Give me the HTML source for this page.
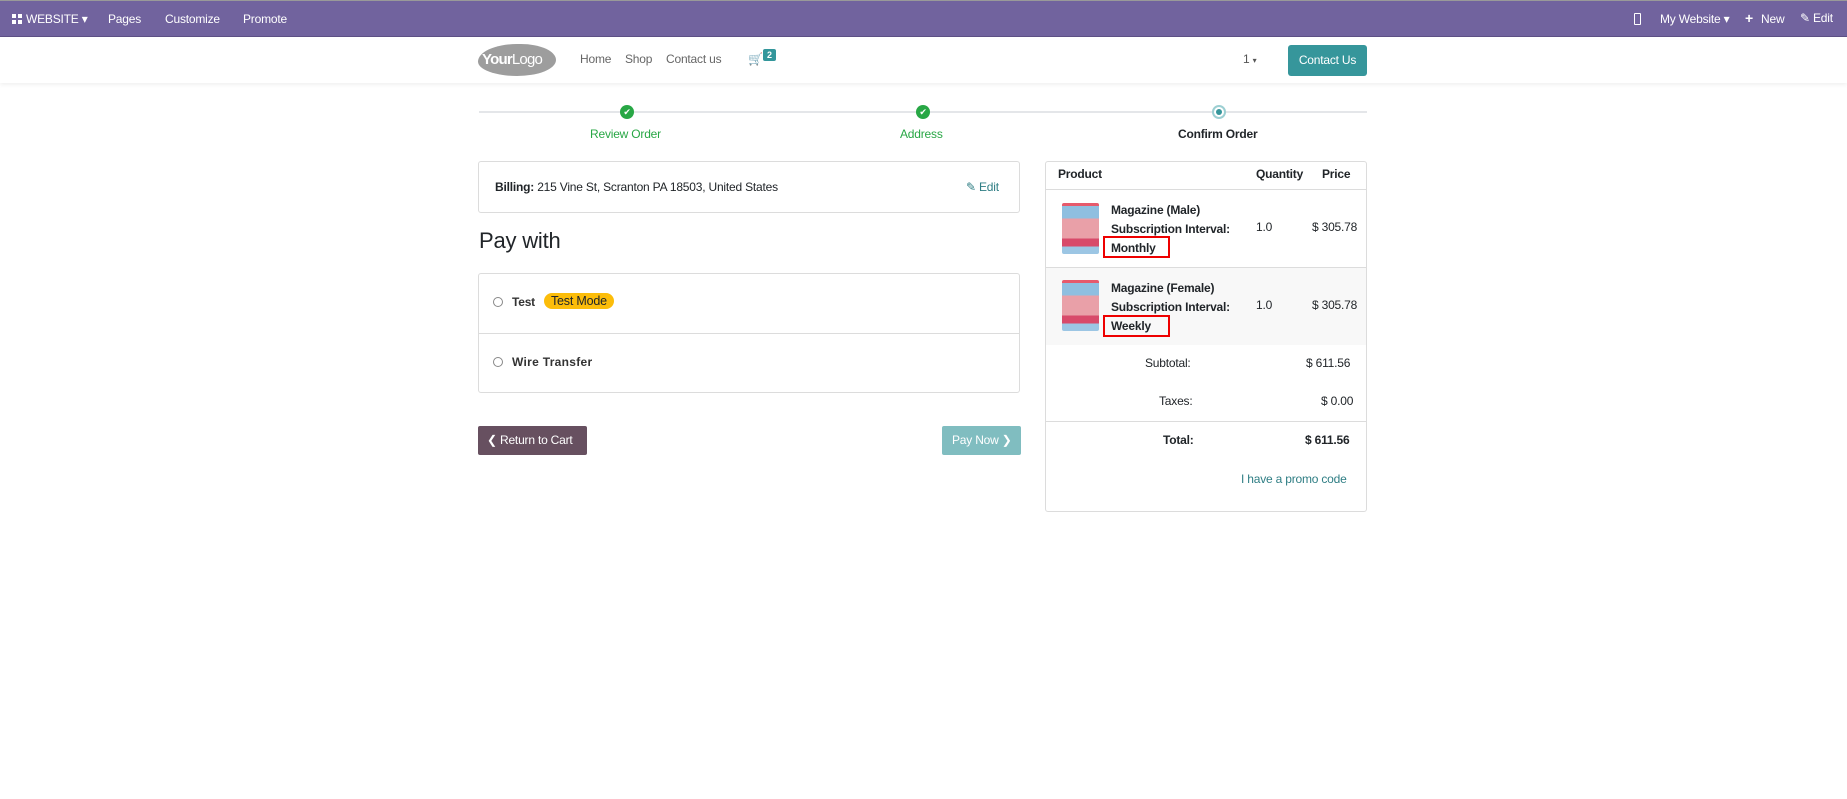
<!DOCTYPE html>
<html><head><meta charset="utf-8"><style>
*{box-sizing:border-box;margin:0;padding:0}
body{width:1847px;height:799px;background:#fff;font-family:"Liberation Sans",sans-serif;font-size:12px;letter-spacing:-.2px;color:#212529;position:relative;overflow:hidden}
.a{position:absolute;white-space:nowrap}
.top{position:absolute;left:0;top:0;width:1847px;height:37px;background:#71639e;border-top:1px solid #999;border-bottom:1px solid #5e5186;color:#fff;font-size:12px}
.nav{position:absolute;left:0;top:37px;width:1847px;height:46px;background:#fff;box-shadow:0 2px 4px rgba(0,0,0,.06)}
.card{position:absolute;border:1px solid #dcdcdc;border-radius:3px;background:#fff}
b{font-weight:bold}
.teal{color:#2f7e84}
</style></head><body>
<div class="top">
 <div class="a" style="left:12px;top:13px;width:10px;height:10px;background:linear-gradient(#fff 0 4px,transparent 4px 6px,#fff 6px) ;"></div>
 <div class="a" style="left:16px;top:13px;width:2px;height:10px;background:#71639e"></div>
 <div class="a" style="left:26px;top:11px">WEBSITE ▾</div>
 <div class="a" style="left:108px;top:11px">Pages</div>
 <div class="a" style="left:165px;top:11px">Customize</div>
 <div class="a" style="left:243px;top:11px">Promote</div>
 <div class="a" style="left:1634px;top:12px;width:7px;height:12px;border:1.5px solid #fff;border-radius:1px"></div>
 <div class="a" style="left:1660px;top:11px">My Website ▾</div>
 <div class="a" style="left:1745px;top:9px;font-weight:bold;font-size:14px">+</div>
 <div class="a" style="left:1761px;top:11px">New</div>
 <div class="a" style="left:1800px;top:10px">✎ Edit</div>
</div>
<div class="nav">
 <div class="a" style="left:478px;top:7px;width:78px;height:32px;background:#9d9d9d;border-radius:50% 45% 50% 50%/55% 50% 50% 45%"></div>
 <div class="a" style="left:482px;top:14px;color:#fff;font-size:15px;letter-spacing:-.8px"><b>Your</b>Logo</div>
 <div class="a" style="left:580px;top:15px;color:#666">Home</div>
 <div class="a" style="left:625px;top:15px;color:#666">Shop</div>
 <div class="a" style="left:666px;top:15px;color:#666">Contact us</div>
 <div class="a" style="left:748px;top:15px;color:#666;font-size:12px">🛒</div>
 <div class="a" style="left:763px;top:12px;background:#33969b;color:#fff;font-size:9px;font-weight:bold;padding:1px 4px;border-radius:2px">2</div>
 <div class="a" style="left:1243px;top:15px;color:#555">1 <span style="font-size:8px">▾</span></div>
 <div class="a" style="left:1288px;top:8px;width:79px;height:31px;background:#36969b;border-radius:3px;color:#fff;text-align:center;line-height:31px">Contact Us</div>
</div>
<div class="a" style="left:479px;top:111px;width:888px;height:2px;background:#e4e6e9"></div>
<div class="a" style="left:620px;top:105px;width:14px;height:14px;border-radius:50%;background:#28a745;color:#fff;font-size:9px;text-align:center;line-height:14px">✔</div>
<div class="a" style="left:916px;top:105px;width:14px;height:14px;border-radius:50%;background:#28a745;color:#fff;font-size:9px;text-align:center;line-height:14px">✔</div>
<div class="a" style="left:1212px;top:105px;width:14px;height:14px;border-radius:50%;background:#fff;border:2px solid #9ccfd2"><div style="margin:2px;width:6px;height:6px;border-radius:50%;background:#36969b"></div></div>
<div class="a" style="left:590px;top:127px;color:#28a745">Review Order</div>
<div class="a" style="left:900px;top:127px;color:#28a745">Address</div>
<div class="a" style="left:1178px;top:127px;font-weight:bold">Confirm Order</div>

<div class="card" style="left:478px;top:161px;width:542px;height:52px"></div>
<div class="a" style="left:495px;top:180px"><b>Billing:</b> 215 Vine St, Scranton PA 18503, United States</div>
<div class="a teal" style="left:966px;top:180px">✎ Edit</div>
<div class="a" style="left:479px;top:228px;font-size:22px">Pay with</div>

<div class="card" style="left:478px;top:273px;width:542px;height:120px"></div>
<div class="a" style="left:479px;top:333px;width:540px;height:1px;background:#dcdcdc"></div>
<div class="a" style="left:493px;top:297px;width:10px;height:10px;border:1px solid #888;border-radius:50%"></div>
<div class="a" style="left:512px;top:295px;font-weight:bold;font-size:12px;color:#333">Test</div>
<div class="a" style="left:544px;top:293px;background:#fcbd0a;border-radius:8px;padding:1px 7px;font-size:12.5px">Test Mode</div>
<div class="a" style="left:493px;top:357px;width:10px;height:10px;border:1px solid #888;border-radius:50%"></div>
<div class="a" style="left:512px;top:355px;font-weight:bold;font-size:12px;color:#333;letter-spacing:.3px">Wire Transfer</div>

<div class="a" style="left:478px;top:426px;width:109px;height:29px;background:#675060;border-radius:2px;color:#fff;line-height:29px;padding-left:9px">❮ Return to Cart</div>
<div class="a" style="left:942px;top:426px;width:79px;height:29px;background:#80bdc0;border-radius:2px;color:#fff;line-height:29px;padding-left:10px">Pay Now ❯</div>

<div class="card" style="left:1045px;top:161px;width:322px;height:351px"></div>
<div class="a" style="left:1046px;top:189px;width:320px;height:1px;background:#dcdcdc"></div>
<div class="a" style="left:1046px;top:267px;width:320px;height:78px;background:#f8f8f8;border-top:1px solid #dcdcdc"></div>
<div class="a" style="left:1058px;top:167px;font-weight:bold">Product</div>
<div class="a" style="left:1256px;top:167px;font-weight:bold">Quantity</div>
<div class="a" style="left:1322px;top:167px;font-weight:bold">Price</div>

<div class="a" style="left:1062px;top:203px;width:37px;height:51px;background:linear-gradient(#e65a6c 0 3px,#8fbfe0 3px 30%,#e9a0a8 30% 70%,#d84a6a 70% 85%,#9cc6e4 85%);border-radius:2px"></div>
<div class="a" style="left:1111px;top:201px;font-weight:bold;line-height:19px">Magazine (Male)<br>Subscription Interval:<br>Monthly</div>
<div class="a" style="left:1103px;top:236px;width:67px;height:22px;border:2px solid #e00"></div>
<div class="a" style="left:1256px;top:220px">1.0</div>
<div class="a" style="left:1312px;top:220px">$ 305.78</div>

<div class="a" style="left:1062px;top:280px;width:37px;height:51px;background:linear-gradient(#e65a6c 0 3px,#8fbfe0 3px 30%,#e9a0a8 30% 70%,#d84a6a 70% 85%,#9cc6e4 85%);border-radius:2px"></div>
<div class="a" style="left:1111px;top:279px;font-weight:bold;line-height:19px">Magazine (Female)<br>Subscription Interval:<br>Weekly</div>
<div class="a" style="left:1103px;top:315px;width:67px;height:22px;border:2px solid #e00"></div>
<div class="a" style="left:1256px;top:298px">1.0</div>
<div class="a" style="left:1312px;top:298px">$ 305.78</div>

<div class="a" style="left:1145px;top:356px">Subtotal:</div>
<div class="a" style="left:1306px;top:356px">$ 611.56</div>
<div class="a" style="left:1159px;top:394px">Taxes:</div>
<div class="a" style="left:1321px;top:394px">$ 0.00</div>
<div class="a" style="left:1046px;top:421px;width:320px;height:1px;background:#dcdcdc"></div>
<div class="a" style="left:1163px;top:433px;font-weight:bold">Total:</div>
<div class="a" style="left:1305px;top:433px;font-weight:bold">$ 611.56</div>
<div class="a teal" style="left:1241px;top:472px">I have a promo code</div>
</body></html>
